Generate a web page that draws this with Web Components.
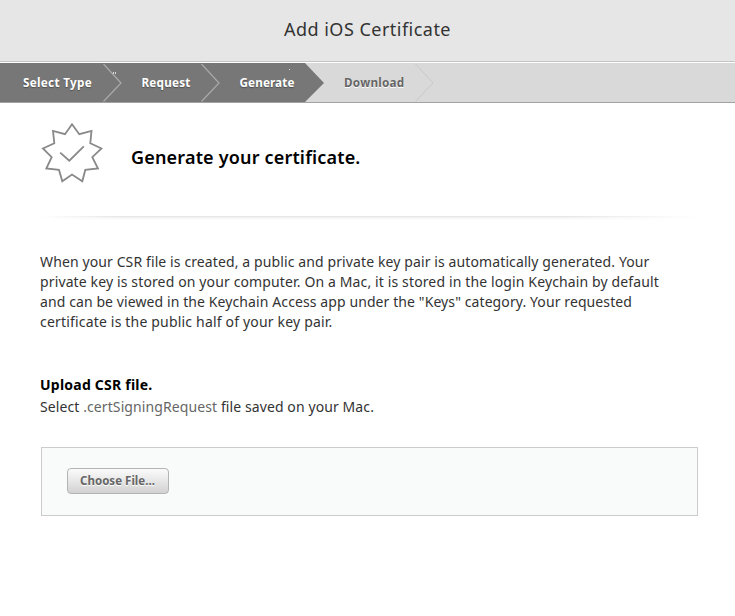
<!DOCTYPE html>
<html lang="en">
<head>
<meta charset="utf-8">
<title>Add iOS Certificate</title>
<style>
body{margin:0;background:#fff;color:#333;font-family:"Noto Sans","Open Sans",sans-serif;font-size:14px}
</style>
</head>
<body>
<cert-page></cert-page>
<script>
const define = (name, html, setup) => customElements.define(name, class extends HTMLElement {
  connectedCallback() {
    if (this.shadowRoot) return;
    const t = document.createElement('template');
    t.innerHTML = html;
    this.attachShadow({mode: 'open'}).append(t.content.cloneNode(true));
    if (setup) setup(this);
  }
});

/* One line of text, tracked so that it fills the width given in "w". */
define('fit-line', `<style>:host{display:block;white-space:nowrap}span{display:inline-block}</style><span><slot></slot></span>`, el => {
  const s = el.shadowRoot.querySelector('span');
  const n = el.textContent.length;
  s.style.letterSpacing = (+el.getAttribute('w') - s.getBoundingClientRect().width) / n + 'px';
});

define('page-header', `<style>
:host{display:flex;box-sizing:border-box;height:62px;padding-left:284px;background:#e6e6e6;border-bottom:1px solid #c4c4c4;font-size:18px;line-height:59px}
</style><slot></slot>`);

define('step-item', `<style>
:host{display:flex;height:39px;align-items:center;box-sizing:border-box;background:#777;color:#fff;font-weight:700;font-size:11.7px;line-height:39px;text-shadow:0 1px 1px rgba(0,0,0,.35)}
:host([next]){background:#d9d9d9;color:#666;text-shadow:0 1px 0 #fff}
.t{flex:1}svg{display:block;flex:none}
</style><div class="t"><slot></slot></div><slot name="edge"></slot>`);

define('step-bar', `<style>
:host{display:grid;position:relative;grid-template-columns:122px 98px 104px 110px 1fr;height:39px;margin-top:1px;background:#d9d9d9;border-bottom:1px solid #a2a2a2}
step-item:nth-of-type(1){padding-left:23px}
step-item:nth-of-type(2){padding-left:19.5px}
step-item:nth-of-type(3){padding-left:19.5px}
step-item:nth-of-type(4){padding-left:20px}
svg{display:block}
.marks{position:absolute;left:113px;top:5px}
</style>
<step-item><fit-line w="69">Select Type</fit-line><svg slot="edge" width="19" height="39"><path d="M.5 1L18 20L.5 38.5" fill="none" stroke="#aaa" stroke-width="1.2"/></svg></step-item>
<step-item><fit-line w="49">Request</fit-line><svg slot="edge" width="19" height="39"><path d="M.5 1L18 20L.5 38.5" fill="none" stroke="#aaa" stroke-width="1.2"/></svg></step-item>
<step-item><fit-line w="55">Generate</fit-line><svg slot="edge" width="19" height="39"><path d="M0 0L19 20L0 39V39H19V0Z" fill="#d9d9d9"/></svg></step-item>
<step-item next><fit-line w="60.5">Download</fit-line><svg slot="edge" width="19" height="39"><path d="M.5 1L18 20L.5 38.5" fill="none" stroke="#c8c8c8"/></svg></step-item>
<svg class="marks" width="180" height="10"><path d="M0 4h1v2H0zM2 4h1v2H2zM176 1h1v1h-1z" fill="#ddd"/></svg>`);

define('seal-icon', `<style>:host{display:block;width:62px;height:62px}svg{display:block}</style>
<svg width="62" height="62" viewBox="41 122 62 62" fill="none" stroke="#898989" stroke-width="1.8">
<path d="M72 124.3L79.3 134.2L91.5 130.9L90.3 143.2L101.5 148.5L92.3 157.2L98 168.5L85.3 169.9L82.3 181.3L72 174.5L62.3 181.3L59 169.9L46.3 168.5L51.7 157.2L42.9 148.5L54.3 143.2L53 130.9L65 134.2Z"/>
<path d="M60.2 152.6L69.3 160.7L83.8 146.3"/></svg>`);

define('section-title', `<style>
:host{display:flex;height:94px;color:#000;font-size:18px;font-weight:600}
.i{padding-left:1px;width:90px}.t{line-height:70px}
</style><div class="i"><seal-icon></seal-icon></div><div class="t"><slot></slot></div>`);

define('soft-rule', `<style>
:host{display:block;height:4px;width:658px;background:linear-gradient(90deg,#fff,transparent 12%,transparent 80%,#fff),linear-gradient(#e0e0e0,#f2f2f2 35%,#fff)}
</style>`);

define('choose-button', `<style>
:host{display:block}
button{display:block;box-sizing:border-box;width:102px;height:26px;padding:0 0 0 12px;text-align:left;border:1px solid #b4b4b4;border-radius:4px;background:linear-gradient(#fbfbfb,#d2d2d2);font:700 11.5px/24px "Noto Sans","Open Sans",sans-serif;color:#666;text-shadow:0 1px 0 #fff}
</style><button type="button"><slot></slot></button>`);

define('upload-box', `<style>
:host{display:flex;box-sizing:border-box;width:657px;height:69px;margin:29px 0 0 1px;padding:20px 25px;border:1px solid #ccc;background:#f9fbfa}
</style><slot></slot>`);

define('cert-page', `<style>
:host{display:block;height:616px;overflow:hidden;background:#fff}
main{padding:19px 37px 0 40px}
.copy{margin-top:32px;line-height:20px}
.upload{margin-top:42px;line-height:22px}
.upload b{display:block;color:#000}
.upload code{font:inherit;color:#666}
</style>
<page-header><fit-line w="167">Add iOS Certificate</fit-line></page-header>
<step-bar></step-bar>
<main>
<section-title><fit-line w="229.5">Generate your certificate.</fit-line></section-title>
<soft-rule></soft-rule>
<div class="copy">
<fit-line w="609.5">When your CSR file is created, a public and private key pair is automatically generated. Your</fit-line>
<fit-line w="619">private key is stored on your computer. On a Mac, it is stored in the login Keychain by default</fit-line>
<fit-line w="592">and can be viewed in the Keychain Access app under the "Keys" category. Your requested</fit-line>
<fit-line w="292.5">certificate is the public half of your key pair.</fit-line>
</div>
<div class="upload">
<b><fit-line w="112.5">Upload CSR file.</fit-line></b>
<fit-line w="334">Select <code>.certSigningRequest</code> file saved on your Mac.</fit-line>
</div>
<upload-box><choose-button><fit-line w="75">Choose File...</fit-line></choose-button></upload-box>
</main>`);
</script>
</body>
</html>
